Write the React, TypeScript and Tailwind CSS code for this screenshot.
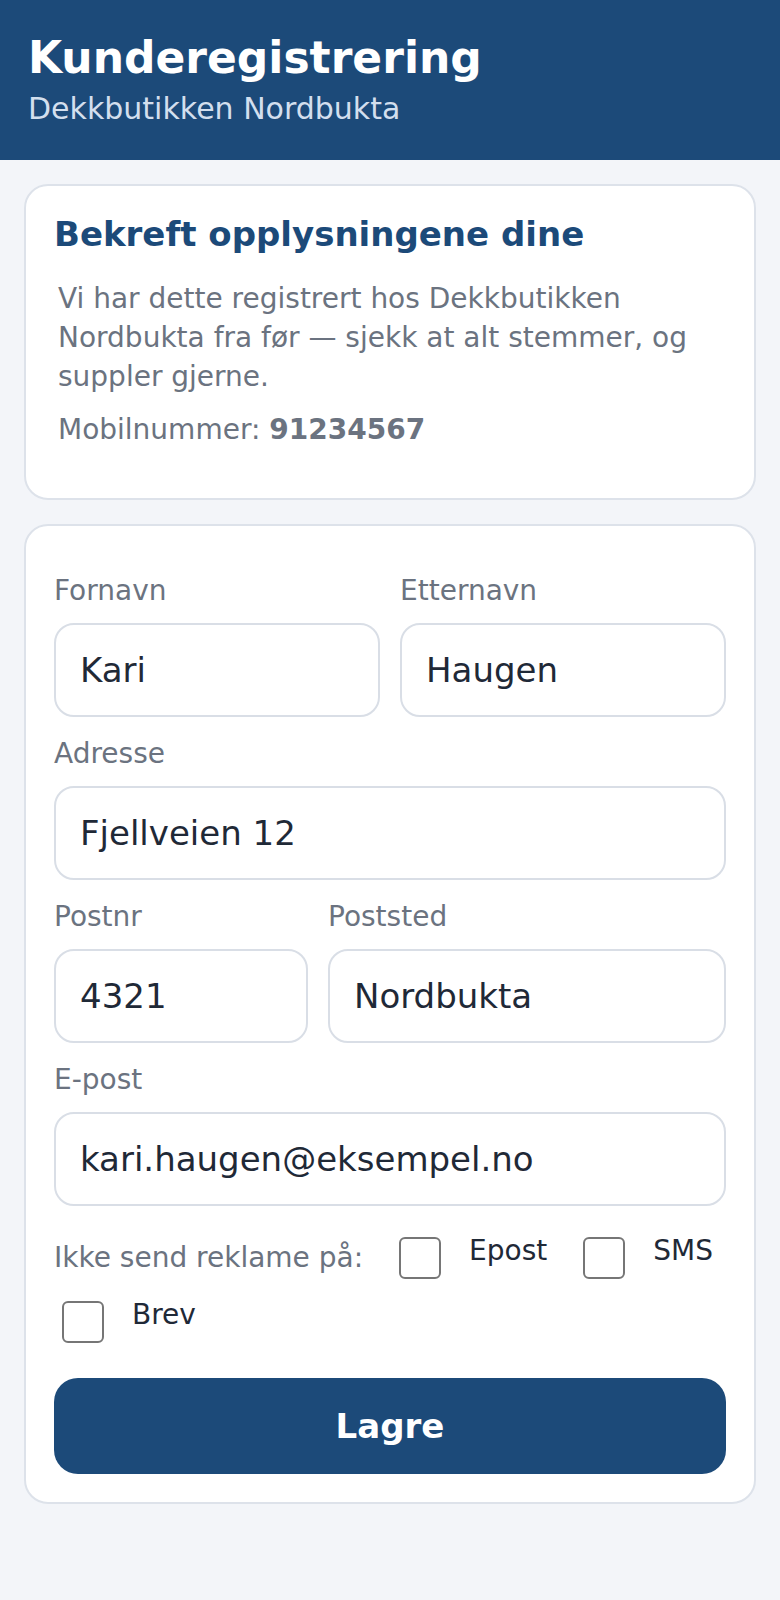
import React from "react";

const font = { fontFamily: '"DejaVu Sans", Verdana, sans-serif' };

function Field({ label, value }: { label: string; value: string }) {
  return (
    <div className="flex flex-col">
      <label className="text-[28px] leading-[36px] text-[#6b7380] mb-[14px]">{label}</label>
      <div className="h-[94px] rounded-[20px] border-2 border-[#d9dee6] bg-white px-[24px] flex items-center text-[34px] text-[#1f2937]">
        {value}
      </div>
    </div>
  );
}

function Check({ label }: { label: string }) {
  return (
    <div className="flex items-start">
      <span className="mt-[6px] mb-[6px] ml-[8px] w-[42px] h-[42px] rounded-[6px] border-2 border-[#767676] bg-white shrink-0" />
      <span className="ml-[28px] text-[28px] leading-[40px] text-[#1f2937]">{label}</span>
    </div>
  );
}

export default function App() {
  return (
    <div className="min-h-screen bg-[#f3f5f9]" style={font}>
      <header className="bg-[#1c4a79] pt-[30px] pb-[30px] px-[28px]">
        <h1 className="text-[44px] leading-[56px] font-bold text-white">Kunderegistrering</h1>
        <p className="mt-[2px] text-[30px] leading-[42px] text-[#d3dfee]">Dekkbutikken Nordbukta</p>
      </header>

      <main className="px-[24px] pt-[24px] pb-[24px] flex flex-col gap-[24px]">
        <section className="bg-white border-2 border-[#dde2ea] rounded-[24px] px-[28px] pt-[28px] pb-[49px]">
          <h2 className="text-[34px] leading-[41px] font-bold text-[#1c4a79] mb-[24px]">
            Bekreft opplysningene dine
          </h2>
          <div className="ml-[4px] text-[28px] leading-[39px] text-[#6b7380]">
            <p>Vi har dette registrert hos Dekkbutikken Nordbukta fra før — sjekk at alt stemmer, og suppler gjerne.</p>
            <p className="mt-[14px]">
              Mobilnummer: <span className="font-bold">91234567</span>
            </p>
          </div>
        </section>

        <section className="bg-white border-2 border-[#dde2ea] rounded-[24px] px-[28px] pt-[47px] pb-[28px]">
          <div className="flex flex-col gap-[19px]">
            <div className="grid grid-cols-2 gap-[20px]">
              <Field label="Fornavn" value="Kari" />
              <Field label="Etternavn" value="Haugen" />
            </div>
            <Field label="Adresse" value="Fjellveien 12" />
            <div className="grid grid-cols-[254px_1fr] gap-[20px]">
              <Field label="Postnr" value="4321" />
              <Field label="Poststed" value="Nordbukta" />
            </div>
            <Field label="E-post" value="kari.haugen@eksempel.no" />
          </div>

          <div className="mt-[25px] flex flex-wrap items-center gap-x-[28px] gap-y-[10px]">
            <span className="text-[28px] leading-[40px] text-[#6b7380]">Ikke send reklame på:</span>
            <Check label="Epost" />
            <Check label="SMS" />
            <Check label="Brev" />
          </div>

          <button className="mt-[29px] w-full h-[96px] rounded-[24px] bg-[#1c4a79] text-white text-[34px] font-bold">
            Lagre
          </button>
        </section>
      </main>
    </div>
  );
}
